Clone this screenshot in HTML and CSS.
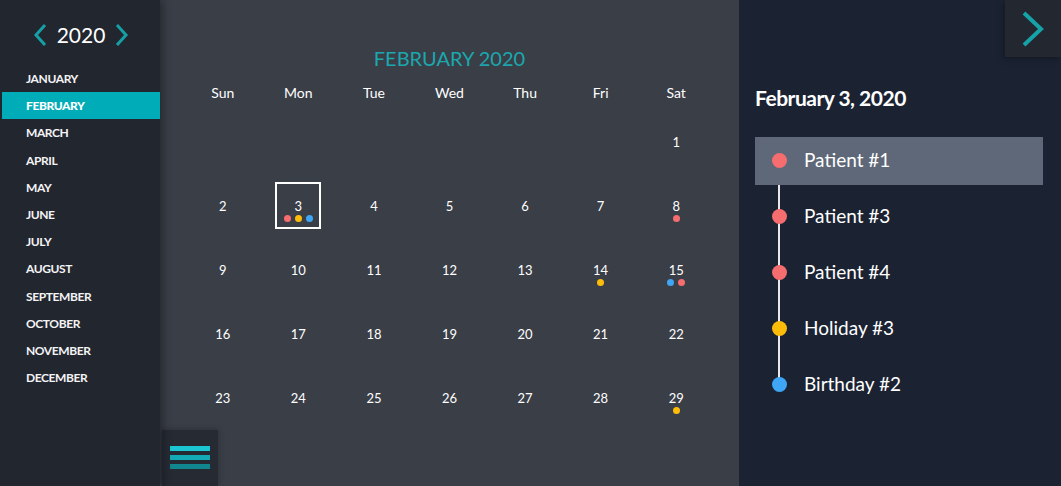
FILE: index.html
```html
<!DOCTYPE html>
<html>
<head>
<meta charset="utf-8">
<link rel="stylesheet" href="styles.css">
</head>
<body>
<div class="app">
  <aside class="sidebar">
    <div class="year-nav">
      <svg class="chev" width="14" height="24" viewBox="0 0 14 24"><path d="M12 2 L3 12 L12 22" fill="none" stroke="#16a0a5" stroke-width="3"/></svg>
      <span class="year">2020</span>
      <svg class="chev" width="14" height="24" viewBox="0 0 14 24"><path d="M2 2 L11 12 L2 22" fill="none" stroke="#16a0a5" stroke-width="3"/></svg>
    </div>
    <ul class="months">
      <li>JANUARY</li>
      <li class="active">FEBRUARY</li>
      <li>MARCH</li>
      <li>APRIL</li>
      <li>MAY</li>
      <li>JUNE</li>
      <li>JULY</li>
      <li>AUGUST</li>
      <li>SEPTEMBER</li>
      <li>OCTOBER</li>
      <li>NOVEMBER</li>
      <li>DECEMBER</li>
    </ul>
  </aside>

  <main class="calendar">
    <h1 class="title">FEBRUARY 2020</h1>
    <div class="weekdays">
      <span>Sun</span><span>Mon</span><span>Tue</span><span>Wed</span><span>Thu</span><span>Fri</span><span>Sat</span>
    </div>
    <div class="grid">
      <div class="cell"></div><div class="cell"></div><div class="cell"></div><div class="cell"></div><div class="cell"></div><div class="cell"></div>
      <div class="cell"><div class="day"><span class="num">1</span><span class="dots"></span></div></div>

      <div class="cell"><div class="day"><span class="num">2</span><span class="dots"></span></div></div>
      <div class="cell"><div class="day selected"><span class="num">3</span><span class="dots"><i class="red"></i><i class="yellow"></i><i class="blue"></i></span></div></div>
      <div class="cell"><div class="day"><span class="num">4</span><span class="dots"></span></div></div>
      <div class="cell"><div class="day"><span class="num">5</span><span class="dots"></span></div></div>
      <div class="cell"><div class="day"><span class="num">6</span><span class="dots"></span></div></div>
      <div class="cell"><div class="day"><span class="num">7</span><span class="dots"></span></div></div>
      <div class="cell"><div class="day"><span class="num">8</span><span class="dots"><i class="red"></i></span></div></div>

      <div class="cell"><div class="day"><span class="num">9</span><span class="dots"></span></div></div>
      <div class="cell"><div class="day"><span class="num">10</span><span class="dots"></span></div></div>
      <div class="cell"><div class="day"><span class="num">11</span><span class="dots"></span></div></div>
      <div class="cell"><div class="day"><span class="num">12</span><span class="dots"></span></div></div>
      <div class="cell"><div class="day"><span class="num">13</span><span class="dots"></span></div></div>
      <div class="cell"><div class="day"><span class="num">14</span><span class="dots"><i class="yellow"></i></span></div></div>
      <div class="cell"><div class="day"><span class="num">15</span><span class="dots"><i class="blue"></i><i class="red"></i></span></div></div>

      <div class="cell"><div class="day"><span class="num">16</span><span class="dots"></span></div></div>
      <div class="cell"><div class="day"><span class="num">17</span><span class="dots"></span></div></div>
      <div class="cell"><div class="day"><span class="num">18</span><span class="dots"></span></div></div>
      <div class="cell"><div class="day"><span class="num">19</span><span class="dots"></span></div></div>
      <div class="cell"><div class="day"><span class="num">20</span><span class="dots"></span></div></div>
      <div class="cell"><div class="day"><span class="num">21</span><span class="dots"></span></div></div>
      <div class="cell"><div class="day"><span class="num">22</span><span class="dots"></span></div></div>

      <div class="cell"><div class="day"><span class="num">23</span><span class="dots"></span></div></div>
      <div class="cell"><div class="day"><span class="num">24</span><span class="dots"></span></div></div>
      <div class="cell"><div class="day"><span class="num">25</span><span class="dots"></span></div></div>
      <div class="cell"><div class="day"><span class="num">26</span><span class="dots"></span></div></div>
      <div class="cell"><div class="day"><span class="num">27</span><span class="dots"></span></div></div>
      <div class="cell"><div class="day"><span class="num">28</span><span class="dots"></span></div></div>
      <div class="cell"><div class="day"><span class="num">29</span><span class="dots"><i class="yellow"></i></span></div></div>
    </div>
    <button class="menu-btn" aria-label="menu">
      <span class="bar b1"></span><span class="bar b2"></span><span class="bar b3"></span>
    </button>
  </main>

  <section class="events">
    <button class="next-btn" aria-label="next">
      <svg width="24" height="36" viewBox="0 0 24 36"><path d="M3 2 L20 18 L3 34" fill="none" stroke="#16a3a8" stroke-width="4"/></svg>
    </button>
    <h2 class="date">February 3, 2020</h2>
    <ul class="timeline">
      <li class="item current"><i class="dot red"></i><span>Patient #1</span></li>
      <li class="item"><i class="dot red"></i><span>Patient #3</span></li>
      <li class="item"><i class="dot red"></i><span>Patient #4</span></li>
      <li class="item"><i class="dot yellow"></i><span>Holiday #3</span></li>
      <li class="item"><i class="dot blue"></i><span>Birthday #2</span></li>
    </ul>
  </section>
</div>
</body>
</html>
```

FILE: styles.css
```css
* { box-sizing: border-box; }
html, body {
  margin: 0;
  padding: 0;
  width: 1061px;
  height: 486px;
  overflow: hidden;
  background: #1b2333;
  font-family: "Lato", "Open Sans", sans-serif;
}
.app {
  display: flex;
  width: 1061px;
  height: 486px;
}

/* Sidebar */
.sidebar {
  width: 160px;
  flex: none;
  background: #22262f;
  position: relative;
  z-index: 2;
  box-shadow: 3px 0 8px rgba(0,0,0,0.35);
}
.year-nav {
  display: flex;
  align-items: center;
  justify-content: center;
  gap: 10px;
  height: 46px;
  margin-top: 12px;
  padding-left: 2px;
}
.chev { display: block; }
.year {
  color: #ffffff;
  font-size: 21px;
  font-weight: 400;
  line-height: 46px;
}
.months {
  list-style: none;
  margin: 7px 0 0 0;
  padding: 0;
}
.months li {
  height: 27.2px;
  line-height: 27px;
  margin-left: 2px;
  padding-left: 24px;
  color: #f4f4f6;
  font-size: 12px;
  font-weight: 700;
  letter-spacing: -0.4px;
}
.months li.active {
  background: #00acb8;
  color: #ffffff;
  font-weight: 900;
}

/* Calendar */
.calendar {
  width: 579px;
  flex: none;
  background: #3a3e47;
  position: relative;
  padding: 0 25px;
}
.title {
  margin: 44px 0 0 0;
  height: 28px;
  line-height: 28px;
  text-align: center;
  color: #1aa8ae;
  font-size: 20px;
  font-weight: 400;
}
.weekdays {
  display: grid;
  grid-template-columns: repeat(7, 1fr);
  height: 24px;
  line-height: 24px;
  margin-top: 9px;
}
.weekdays span {
  text-align: center;
  color: #ffffff;
  font-size: 14px;
}
.grid {
  display: grid;
  grid-template-columns: repeat(7, 1fr);
  grid-auto-rows: 64px;
  margin-top: 4px;
}
.cell {
  display: flex;
  align-items: center;
  justify-content: center;
}
.day {
  width: 46px;
  height: 47px;
  display: flex;
  flex-direction: column;
  align-items: center;
  padding-top: 14px;
  border: 2px solid transparent;
}
.day.selected { border-color: #ffffff; }
.num {
  color: #ffffff;
  font-size: 13px;
  line-height: 16px;
  height: 16px;
}
.dots {
  display: flex;
  gap: 4px;
  height: 7px;
  margin-top: 1px;
}
.dots i {
  display: block;
  width: 7px;
  height: 7px;
  border-radius: 50%;
}
.red { background: #f56d6f; }
.yellow { background: #fbbd0a; }
.blue { background: #3ea6f5; }

.menu-btn {
  position: absolute;
  left: 2px;
  bottom: 0;
  width: 56px;
  height: 56px;
  border: none;
  padding: 16px 8px 0 8px;
  background: #252a33;
  display: flex;
  flex-direction: column;
  gap: 4px;
  box-shadow: 0 0 6px rgba(0,0,0,0.3);
}
.bar {
  display: block;
  width: 40px;
  height: 5px;
}
.b1 { background: #1cc6d3; }
.b2 { background: #14aab5; }
.b3 { background: #10878f; }

/* Events */
.events {
  flex: 1;
  background: #1b2333;
  position: relative;
  padding: 0 18px 0 16px;
}
.next-btn {
  position: absolute;
  top: 0;
  right: 0;
  width: 56px;
  height: 57px;
  border: none;
  padding: 0;
  background: #23272f;
  display: flex;
  align-items: center;
  justify-content: center;
  box-shadow: -2px 2px 6px rgba(0,0,0,0.3);
}
.date {
  margin: 84px 0 0 0;
  height: 28px;
  line-height: 28px;
  color: #ffffff;
  font-size: 21px;
  font-weight: 700;
  letter-spacing: -0.5px;
}
.timeline {
  list-style: none;
  margin: 25px 0 0 0;
  padding: 0;
  position: relative;
  display: flex;
  flex-direction: column;
  gap: 8px;
}
.timeline::before {
  content: "";
  position: absolute;
  left: 23px;
  top: 48px;
  bottom: 24px;
  width: 2px;
  background: #e8e8ec;
}
.item {
  height: 48px;
  display: flex;
  align-items: center;
  padding-left: 17px;
  gap: 17px;
  color: #ffffff;
  font-size: 19px;
  line-height: 22px;
  padding-bottom: 2px;
  position: relative;
}
.item.current { background: #5e6878; }
.dot {
  display: block;
  width: 15px;
  height: 15px;
  border-radius: 50%;
  position: relative;
  z-index: 1;
}
.item span { display: block; }
```
